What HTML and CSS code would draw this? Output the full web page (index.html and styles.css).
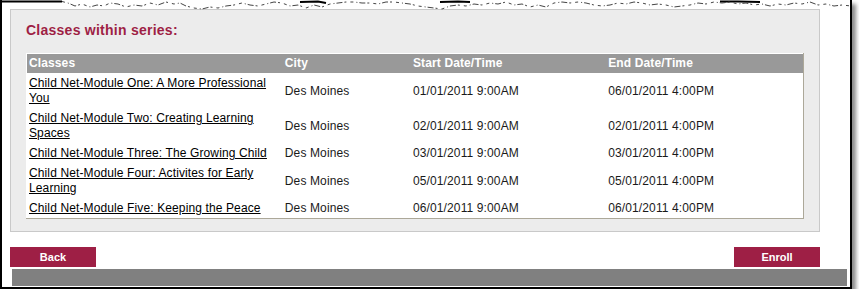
FILE: index.html
```html
<!DOCTYPE html>
<html>
<head>
  <title>Classes within series</title>
  <meta charset="utf-8">
  <link rel="stylesheet" href="styles.css">
</head>
<body>
  <div class="frame">
    <!-- torn paper edge along the top -->
    <svg class="torn-edge" width="852" height="12" viewBox="0 0 852 12">
      <polyline class="edge-solid" points="0,1.5 62,1.5" />
      <polyline class="edge-solid" points="300,2 318,1.5 326,3" />
      <polyline class="edge-solid" points="440,2 458,1.5 470,2" />
      <polyline class="edge-solid" points="720,1.5 738,1.5 760,2" />
      <polyline class="edge-line" points="62,1.5 68,3 75,6 82,4 90,7 97,5 104,6 110,3 118,4 126,7 134,5 142,6 150,3 158,5 166,2 174,4 180,3 186,6 194,8 202,9 210,7 218,8 226,6 234,5 242,3 250,5 258,6 266,4 274,2 282,3 290,6 298,5 306,8 314,5 322,7 330,4 338,3 346,2 354,2 362,3 370,3 378,4 386,2 394,2 402,3 410,4 418,6 426,7 434,8 442,9 450,6 458,5 466,6 474,4 482,5 490,3 498,4 506,2 514,5 522,4 530,7 538,5 546,7 554,3 562,2 570,3 578,2 586,3 594,5 602,6 610,5 618,3 626,4 634,2 642,3 650,5 658,4 666,5 674,7 682,6 690,5 698,3 706,4 714,2 722,3 730,2 738,4 746,3 754,5 762,4 770,6 778,4 786,5 794,3 802,4 810,2 818,5 826,4 834,6 842,5 851,6" />
    </svg>

    <div class="panel">
      <h2 class="panel-title">Classes within series:</h2>
      <table class="class-table">
        <colgroup>
          <col class="col-class">
          <col class="col-city">
          <col class="col-start">
          <col class="col-end">
        </colgroup>
        <thead>
          <tr>
            <th>Classes</th>
            <th>City</th>
            <th>Start Date/Time</th>
            <th>End Date/Time</th>
          </tr>
        </thead>
        <tbody>
          <tr>
            <td><a href="#">Child Net-Module One: A More Professional You</a></td>
            <td>Des Moines</td>
            <td>01/01/2011 9:00AM</td>
            <td>06/01/2011 4:00PM</td>
          </tr>
          <tr>
            <td><a href="#">Child Net-Module Two: Creating Learning Spaces</a></td>
            <td>Des Moines</td>
            <td>02/01/2011 9:00AM</td>
            <td>02/01/2011 4:00PM</td>
          </tr>
          <tr>
            <td><a href="#">Child Net-Module Three: The Growing Child</a></td>
            <td>Des Moines</td>
            <td>03/01/2011 9:00AM</td>
            <td>03/01/2011 4:00PM</td>
          </tr>
          <tr>
            <td><a href="#">Child Net-Module Four: Activites for Early Learning</a></td>
            <td>Des Moines</td>
            <td>05/01/2011 9:00AM</td>
            <td>05/01/2011 4:00PM</td>
          </tr>
          <tr>
            <td><a href="#">Child Net-Module Five: Keeping the Peace</a></td>
            <td>Des Moines</td>
            <td>06/01/2011 9:00AM</td>
            <td>06/01/2011 4:00PM</td>
          </tr>
        </tbody>
      </table>
    </div>

    <div class="actions">
      <button class="action-btn">Back</button>
      <button class="action-btn">Enroll</button>
    </div>

    <div class="footer-bar"></div>
  </div>
</body>
</html>
```

FILE: styles.css
```css
body {
  margin: 0;
  background-color: #fff;
  font-family: "Liberation Sans", Arial, sans-serif;
  color: #1a1a1a;
}

.frame {
  position: relative;
  width: 848px;
  border-left: 2px solid #000;
  border-right: 2px solid #000;
  border-bottom: 2px solid #000;
  padding-top: 9px;
  background-color: #fff;
  box-shadow: 4px 4px 4px rgba(0, 0, 0, 0.45);
}

.torn-edge {
  position: absolute;
  top: 0;
  left: -2px;
  display: block;
}

.edge-solid {
  fill: none;
  stroke: #000;
  stroke-width: 2;
}

.edge-line {
  fill: none;
  stroke: #444;
  stroke-width: 1;
  stroke-dasharray: 3 3 1 2 6 2 2 4;
}

.panel {
  margin-left: 8px;
  width: 778px;
  padding: 12px 15px 12px 15px;
  background-color: #ececec;
  border: 1px solid #c9c9c9;
}

.panel-title {
  margin: 0 0 14px 0;
  font-size: 14px;
  line-height: 17px;
  font-weight: bold;
  letter-spacing: 0.25px;
  color: #9e1f45;
}

.class-table {
  width: 778px;
  table-layout: fixed;
  border-collapse: collapse;
  background-color: #fff;
  border-top: 1px solid #fff;
  border-left: 1px solid #fff;
  border-right: 1px solid #aca899;
  border-bottom: 1px solid #aca899;
  font-size: 12px;
  letter-spacing: 0.12px;
}

.col-class { width: 256px; }
.col-city { width: 128px; }
.col-start { width: 195px; }
.col-end { width: 197px; }

.class-table th {
  background-color: #999;
  color: #fff;
  font-weight: bold;
  text-align: left;
  padding: 2px 2px;
  line-height: 15px;
}

.class-table td {
  padding: 3px 2px 2px 2px;
  line-height: 15px;
  vertical-align: middle;
}

.class-table a {
  color: #000;
  text-decoration: underline;
}

.actions {
  display: flex;
  justify-content: space-between;
  width: 810px;
  margin: 15px 0 0 8px;
}

.action-btn {
  width: 86px;
  height: 20px;
  padding: 0;
  border: none;
  background-color: #9e1f45;
  color: #fff;
  font-family: "Liberation Sans", Arial, sans-serif;
  font-size: 11px;
  font-weight: bold;
}

.footer-bar {
  height: 17px;
  margin: 2px 3px 1px 10px;
  background-color: #808080;
}
```
